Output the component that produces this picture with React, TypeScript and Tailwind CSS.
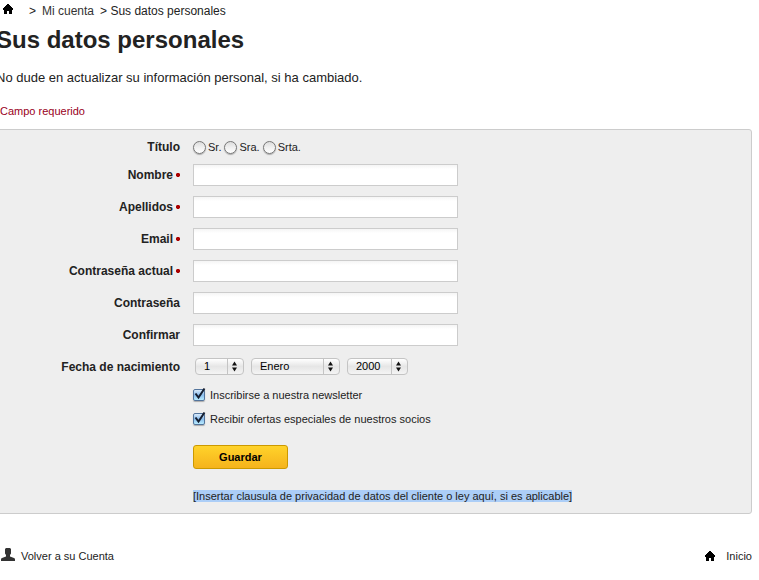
import { useId } from "react";

function HomeIcon() {
  return (
    <svg viewBox="0 0 10 10" className="h-[10px] w-[10px] fill-black" shapeRendering="crispEdges" aria-hidden="true">
      <path d="M4 0h2v1h1v1h1v1h1v1h1v2H9v4H6V7H4v3H1V6H0V4h1V3h1V2h1V1h1z" />
    </svg>
  );
}

function UserIcon() {
  return (
    <svg viewBox="0 0 14 13" className="h-[13px] w-[14px] fill-[#333]" aria-hidden="true">
      <path d="M5 0h4l1 1v4.500L9 7v1.500l4 1.500c.7.300 1 .8 1 1.500V13H0v-1.500c0-.7.3-1.200 1-1.500l4-1.500V7L4 5.500V1z" />
    </svg>
  );
}

const labelClass = "w-[183px] shrink-0 text-right text-xs font-bold text-[#222]";

function TextField({ label, required, type = "text" }: { label: string; required?: boolean; type?: string }) {
  const id = useId();
  return (
    <div className="mb-[10px] flex items-center gap-[13px]">
      <label htmlFor={id} className={labelClass}>
        {label}
        {required && <Star />}
      </label>
      <input
        id={id}
        type={type}
        required={required}
        className="h-[22px] w-[265px] border border-[#ccc] bg-white bg-linear-to-b from-[#f5f5f5] to-white to-20% px-1 text-xs outline-none"
      />
    </div>
  );
}

function Star() {
  return (
    <svg viewBox="0 0 4 4" className="ml-[3px] inline-block h-1 w-1 fill-[#a00] align-[2px]" role="img" aria-label="*">
      <path d="M1 0h2l1 1v1.500L3 4H1L0 2.500V1z" />
    </svg>
  );
}

function Radio({ label }: { label: string }) {
  return (
    <label className="flex items-center gap-[2px]">
      <input
        type="radio"
        name="titulo"
        className="h-[13px] w-[13px] appearance-none rounded-full border border-[#777] bg-linear-to-b from-[#ddd] via-[#f0f0f0] to-white shadow-[0_1px_1px_#aaa]"
      />
      {label}
    </label>
  );
}

function Picker({ label, value, width }: { label: string; value: string; width: string }) {
  return (
    <div className={"relative " + width}>
      <select
        aria-label={label}
        className="block h-[17px] w-full appearance-none rounded-[4px] border border-[#c4c4c4] bg-linear-to-b from-white via-[#e6e6e6] to-[#f4f4f4] pl-2 text-[11px] leading-[15px] text-black"
      >
        <option>{value}</option>
      </select>
      <svg
        viewBox="0 0 17 17"
        className="pointer-events-none absolute top-0 right-0 h-[17px] w-[17px]"
        aria-hidden="true"
      >
        <path d="M0.500 1v15" stroke="#c4c4c4" />
        <path d="M5 7.500 7.500 3.500 10 7.500zM5 9.500h5L7.500 13.500z" fill="#111" />
      </svg>
    </div>
  );
}

function Tick({ label }: { label: string }) {
  return (
    <label className="flex h-6 items-center gap-[5px]">
      <span className="relative h-[12px] w-[12px]">
        <input
          type="checkbox"
          defaultChecked
          className="peer block h-[12px] w-[12px] appearance-none rounded-[2px] border border-[#53749c] bg-linear-to-b from-[#d9eafa] via-[#8abcec] to-[#b9ecff] shadow-[0_1px_1px_#aaa]"
        />
        <svg
          viewBox="0 0 14 14"
          className="pointer-events-none absolute -top-[2px] left-0 hidden h-[14px] w-[14px] peer-checked:block"
          aria-hidden="true"
        >
          <path d="M2.500 6.500 5.500 10.500 11.500 1.500" fill="none" stroke="#151e30" strokeWidth="2" />
        </svg>
      </span>
      {label}
    </label>
  );
}

export default function App() {
  return (
    <main className="overflow-hidden pr-[7px] pb-4 font-['Liberation_Sans',Arial,sans-serif] text-[11px] text-[#222]">
      <nav aria-label="Ruta" className="flex h-[22px] items-center text-xs">
        <a href="#inicio" aria-label="Inicio" className="mr-4 ml-[3px] -translate-y-[2px]">
          <HomeIcon />
        </a>
        <span className="mr-[6px]">&gt;</span>
        <a href="#cuenta" className="mr-[6px] text-[#333]">
          Mi cuenta
        </a>
        <span>&gt; Sus datos personales</span>
      </nav>
      <h1 className="-ml-1 pt-1 text-2xl leading-7 font-bold">Sus datos personales</h1>
      <p className="-ml-1 pt-4 text-[13px] leading-4">No dude en actualizar su información personal, si ha cambiado.</p>
      <p className="pt-[17px] leading-4 text-[#990022]">Campo requerido</p>

      <form
        className="mt-[10px] -ml-1 rounded-[3px] border border-[#ccc] bg-[#eee] pt-[7px] pb-[10px]"
        onSubmit={(e) => e.preventDefault()}
      >
        <div role="radiogroup" aria-labelledby="titulo" className="mb-[7px] flex h-5 items-center gap-[13px]">
          <span id="titulo" className={labelClass}>
            Título
          </span>
          <div className="flex gap-[3px]">
            <Radio label="Sr." />
            <Radio label="Sra." />
            <Radio label="Srta." />
          </div>
        </div>
        <TextField label="Nombre" required />
        <TextField label="Apellidos" required />
        <TextField label="Email" type="email" required />
        <TextField label="Contraseña actual" type="password" required />
        <TextField label="Contraseña" type="password" />
        <TextField label="Confirmar" type="password" />
        <div className="mt-3 flex items-center gap-[13px]">
          <span className={labelClass}>Fecha de nacimiento</span>
          <div className="ml-[2px] flex gap-[7px]">
            <Picker label="Día" value="1" width="w-[49px]" />
            <Picker label="Mes" value="Enero" width="w-[89px]" />
            <Picker label="Año" value="2000" width="w-[61px]" />
          </div>
        </div>
        <div className="mt-2 ml-[196px]">
          <Tick label="Inscribirse a nuestra newsletter" />
          <Tick label="Recibir ofertas especiales de nuestros socios" />
          <button
            type="submit"
            className="mt-[14px] block h-6 w-[95px] rounded-[3px] border border-[#cc9900] bg-linear-to-b from-[#ffd32a] to-[#f5b31c] text-[11px] font-bold text-black"
          >
            Guardar
          </button>
          <p className="mt-[21px] leading-[13px]">
            <span className="bg-[#accef7]">
              [Insertar clausula de privacidad de datos del cliente o ley aquí, si es aplicable]
            </span>
          </p>
        </div>
      </form>

      <footer className="mt-[34px] flex items-center justify-between">
        <a href="#cuenta" className="flex items-center gap-[6px]">
          <span className="ml-px -translate-y-[2px]">
            <UserIcon />
          </span>
          Volver a su Cuenta
        </a>
        <a href="#inicio" className="flex items-center gap-[11px]">
          <HomeIcon />
          Inicio
        </a>
      </footer>
    </main>
  );
}
